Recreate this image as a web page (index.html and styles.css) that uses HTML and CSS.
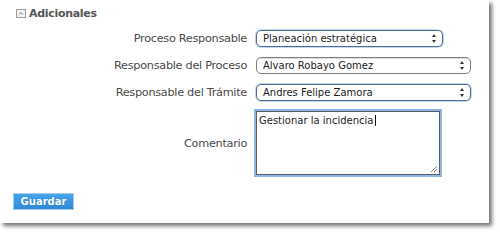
FILE: index.html
```html
<!DOCTYPE html>
<html>
<head>
<meta charset="utf-8">
<link rel="stylesheet" href="styles.css">
</head>
<body>
<div class="panel">
  <div class="header">
    <span class="toggle"><svg width="10" height="9" viewBox="0 0 10 9"><rect x="0.5" y="0.5" width="9" height="8" fill="#f4f4f4" stroke="#9a9a9a"/><path d="M3 5.5 L5 3.5 L7 5.5" fill="none" stroke="#777" stroke-width="1"/></svg></span>
    <span class="title">Adicionales</span>
  </div>
  <div class="form">
    <div class="row">
      <label class="lbl">Proceso Responsable</label>
      <div class="select s1 blue"><span>Planeación estratégica</span><span class="arrows"></span></div>
    </div>
    <div class="row">
      <label class="lbl">Responsable del Proceso</label>
      <div class="select s2 grey"><span>Alvaro Robayo Gomez</span><span class="arrows"></span></div>
    </div>
    <div class="row">
      <label class="lbl">Responsable del Trámite</label>
      <div class="select s2 blue"><span>Andres Felipe Zamora</span><span class="arrows"></span></div>
    </div>
    <div class="row trow">
      <label class="lbl">Comentario</label>
      <div class="textarea"><span>Gestionar la incidencia</span><span class="caret"></span>
        <svg class="grip" width="8" height="8" viewBox="0 0 8 8"><path d="M7 1 L1 7 M7 4 L4 7" stroke="#888" stroke-width="1"/></svg>
      </div>
    </div>
  </div>
  <div class="actions"><span class="btn">Guardar</span></div>
</div>
</body>
</html>
```
FILE: styles.css
```css
html, body { margin: 0; padding: 0; background: #fff; }
body { width: 500px; height: 234px; overflow: hidden; font-family: "DejaVu Sans", Verdana, sans-serif; }
.panel {
  width: 489px; height: 223px; background: #fff;
  box-shadow: 3px 3px 4px rgba(0,0,0,0.55);
  box-sizing: border-box; padding-top: 8px;
  display: flex; flex-direction: column;
}
.header { display: flex; align-items: center; padding-left: 16px; height: 11px; }
.toggle { display: flex; width: 10px; height: 9px; margin-right: 3px; }
.title { font-weight: bold; font-size: 11px; color: #555; letter-spacing: -0.3px; }
.form { display: flex; flex-direction: column; margin-top: 6px; }
.row {
  display: grid; grid-template-columns: 247px 1fr; column-gap: 9px; align-items: center;
  height: 27px;
}
.lbl { text-align: right; font-size: 11.3px; color: #4a4a4a; white-space: nowrap; letter-spacing: -0.3px; }
.select {
  height: 17px; box-sizing: border-box; border-radius: 5px;
  display: flex; align-items: center; justify-content: space-between;
  font-size: 10px; color: #222; padding: 0 5px 0 6px; background: #fff;
}
.select.blue { border: 1px solid #4f6c93; box-shadow: 0 0 0 1px #c8d8ec; }
.select.grey { border: 1px solid #7f7f7f; box-shadow: 0 1px 0 #ddd inset; }
.s1 { width: 187px; }
.s2 { width: 215px; }
.arrows { width: 5px; height: 9px; position: relative; }
.arrows::before, .arrows::after { content: ""; position: absolute; left: 0; border-left: 2.5px solid transparent; border-right: 2.5px solid transparent; }
.arrows::before { top: 0; border-bottom: 3.5px solid #333; }
.arrows::after { bottom: 0; border-top: 3.5px solid #333; }
.trow { height: 70px; margin-top: 2px; }
.textarea {
  position: relative; width: 184px; height: 64px; box-sizing: border-box;
  border: 1px solid #555e6a; box-shadow: 0 0 0 2px #8eb6e4;
  font-size: 10px; color: #222; padding: 2px 2px; line-height: 13px;
}
.caret { display: inline-block; width: 1px; height: 11px; background: #111; vertical-align: -2px; margin-left: 2px; }
.grip { position: absolute; right: 1px; bottom: 1px; }
.actions { padding-left: 13px; margin-top: 12px; }
.btn {
  display: inline-block; width: 61px; height: 17px; box-sizing: border-box;
  background: linear-gradient(#46a4ec, #2d8ad9); border: 1px solid #a8cbe8;
  color: #fff; font-weight: bold; font-size: 10px; text-align: center; line-height: 15px;
  text-shadow: 0 0 1px rgba(0,0,0,0.3);
}
```
